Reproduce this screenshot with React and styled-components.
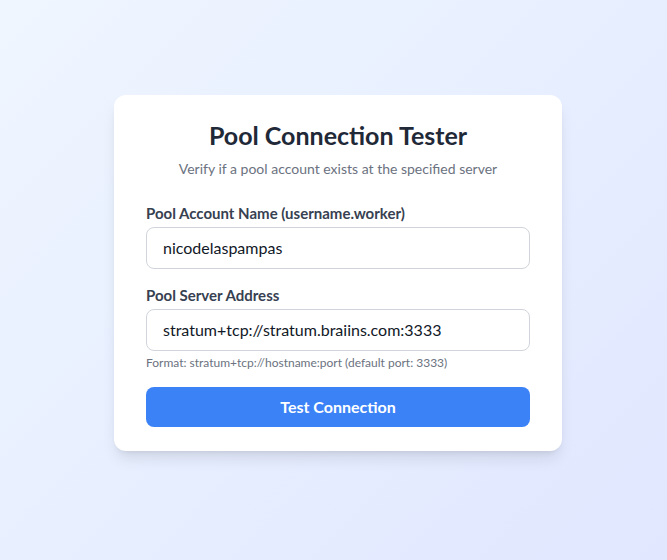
import React from "react";
import styled, { createGlobalStyle } from "styled-components";

const Global = createGlobalStyle`
  html, body { margin: 0; padding: 0; }
  body {
    font-family: Lato, "Noto Sans", sans-serif;
    background: linear-gradient(135deg, #eff6ff 0%, #e0e7ff 100%);
    min-height: 560px;
  }
  * { box-sizing: border-box; }
`;

const Page = styled.div`
  min-height: 560px;
  display: flex;
  justify-content: center;
  align-items: flex-start;
  padding: 95px 0 0 9px;
`;

const Card = styled.div`
  width: 448px;
  background: #ffffff;
  border-radius: 12px;
  padding: 24px 32px;
  box-shadow: 0 10px 15px -3px rgba(0,0,0,0.1), 0 4px 6px -4px rgba(0,0,0,0.1);
`;

const Title = styled.h1`
  margin: 0 0 8px;
  font-size: 25px;
  line-height: 32px;
  font-weight: 700;
  color: #1f2937;
  text-align: center;
`;

const Subtitle = styled.p`
  margin: 0 0 24px;
  font-size: 14px;
  line-height: 20px;
  color: #6b7280;
  text-align: center;
`;

const Field = styled.div`
  margin-bottom: 16px;
`;

const Label = styled.label`
  display: block;
  font-size: 15px;
  line-height: 20px;
  font-weight: 700;
  color: #374151;
  margin-bottom: 4px;
`;

const Input = styled.input`
  display: block;
  width: 100%;
  padding: 8px 16px;
  font-family: inherit;
  font-size: 16px;
  line-height: 24px;
  color: #111827;
  border: 1px solid #d1d5db;
  border-radius: 8px;
  outline: none;
  background: #fff;
`;

const Help = styled.p`
  margin: 4px 0 0;
  font-size: 12px;
  line-height: 16px;
  color: #6b7280;
`;

const Button = styled.button`
  display: block;
  width: 100%;
  padding: 8px 16px;
  font-family: inherit;
  font-size: 16px;
  line-height: 24px;
  font-weight: 700;
  color: #fff;
  background: #3b82f6;
  border: none;
  border-radius: 8px;
  cursor: pointer;
`;

export default function App() {
  return (
    <>
      <Global />
      <Page>
        <Card>
          <Title>Pool Connection Tester</Title>
          <Subtitle>Verify if a pool account exists at the specified server</Subtitle>
          <Field>
            <Label>Pool Account Name (username.worker)</Label>
            <Input defaultValue="nicodelaspampas" />
          </Field>
          <Field>
            <Label>Pool Server Address</Label>
            <Input defaultValue="stratum+tcp://stratum.braiins.com:3333" />
            <Help>Format: stratum+tcp://hostname:port (default port: 3333)</Help>
          </Field>
          <Button>Test Connection</Button>
        </Card>
      </Page>
    </>
  );
}
